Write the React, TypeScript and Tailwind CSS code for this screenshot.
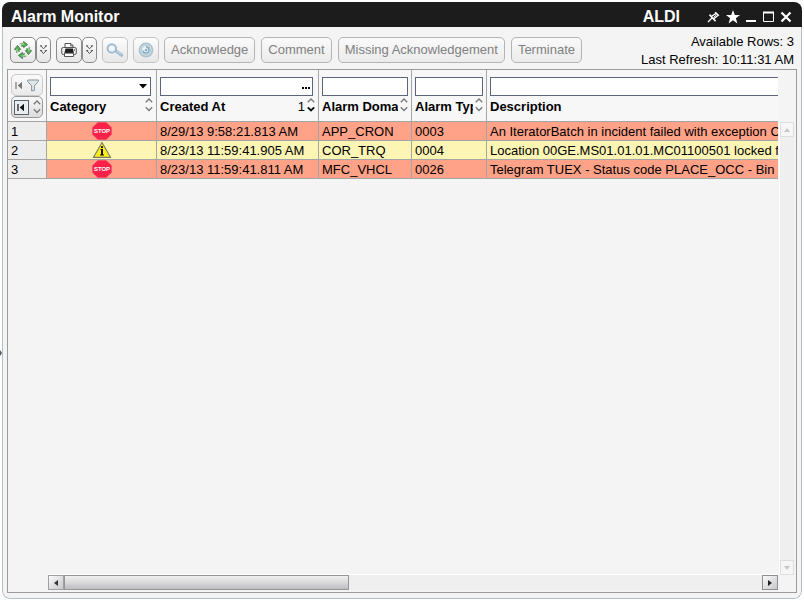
import type { ReactNode } from "react";

type Row = {
  id: number;
  level: "stop" | "warning";
  createdAt: string;
  domain: string;
  type: string;
  description: string;
};

const rows: Row[] = [
  { id: 1, level: "stop", createdAt: "8/29/13 9:58:21.813 AM", domain: "APP_CRON", type: "0003", description: "An IteratorBatch in incident failed with exception C" },
  { id: 2, level: "warning", createdAt: "8/23/13 11:59:41.905 AM", domain: "COR_TRQ", type: "0004", description: "Location 00GE.MS01.01.01.MC01100501 locked f" },
  { id: 3, level: "stop", createdAt: "8/23/13 11:59:41.811 AM", domain: "MFC_VHCL", type: "0026", description: "Telegram TUEX - Status code PLACE_OCC - Bin" },
];

function ToolButton({ label, className, children }: { label: string; className: string; children: ReactNode }) {
  return (
    <button
      type="button"
      aria-label={label}
      className={`flex h-[26px] items-center justify-center rounded-[5px] border bg-linear-to-b from-[#fdfdfd] to-[#e6e6e6] ${className}`}
    >
      {children}
    </button>
  );
}

function TextButton({ children }: { children: string }) {
  return (
    <button
      type="button"
      disabled
      className="h-[26px] shrink-0 rounded-[5px] border border-[#b4b4b4] bg-linear-to-b from-[#fafafa] to-[#ebebeb] px-1.5 whitespace-nowrap text-[#808080]"
    >
      {children}
    </button>
  );
}

function DoubleChevron() {
  return (
    <svg width="7" height="10" viewBox="0 0 7 10" fill="none" stroke="#555" strokeWidth="1">
      <path d="M.7 .8 3.5 3.8 6.3 .8M.7 5.5 3.5 8.6 6.3 5.5" />
      <path d="M0 .9h2.2M4.8 .9H7M0 5.6h2.2M4.8 5.6H7" />
    </svg>
  );
}

function RecycleIcon() {
  return (
    <svg width="18" height="18" viewBox="0 0 18 18">
      {[0, 90, 180, 270].map((angle) => (
        <g key={angle} transform={`rotate(${angle} 9 9)`}>
          <path d="M5.4 3.4A6.7 6.7 0 0 1 9.6 2.2V.4L13.6 3.6 9.6 6.6V5.1A4.4 4.4 0 0 0 7.3 5.6Z" fill="#4fb84e" stroke="#3f5040" strokeWidth=".7" />
          <path d="M6 3.9A6.2 6.2 0 0 1 10 2.9" fill="none" stroke="#c7ecc3" strokeWidth="1" />
          <path d="M5.2 3.4 7.2 5.7" stroke="#fff" strokeWidth="1.2" />
        </g>
      ))}
    </svg>
  );
}

function PrinterIcon() {
  return (
    <svg width="16" height="16" viewBox="0 0 16 16" fill="none" stroke="#555" strokeWidth="1">
      <path d="M4 6V1.5h6L12 3.5V6" fill="#fff" />
      <path d="M9.7 1.7v2.1H12" />
      <rect x=".7" y="5.5" width="14.6" height="7" rx="1.5" fill="#f2f2f2" />
      <path d="M4.5 6.5h7.5l.8 4.5H3.4Z" fill="#1c1c1c" stroke="none" />
      <path d="M3.5 11.2h9v3.3h-9Z" fill="#fff" />
      <path d="M13.5 7.3v1.4" />
    </svg>
  );
}

function SearchIcon() {
  return (
    <svg width="18" height="15" viewBox="0 0 18 15" fill="none">
      <path d="m10 8 5.6 4.2" stroke="#a3bed2" strokeWidth="3.4" strokeLinecap="round" />
      <path d="m11.2 8.3 4.2 3.1" stroke="#cfe0ec" strokeWidth="1" />
      <circle cx="5.8" cy="5.4" r="4.2" fill="#f1f6fa" stroke="#9dbad0" strokeWidth="2" />
    </svg>
  );
}

function TargetIcon() {
  return (
    <svg width="16" height="16" viewBox="0 0 16 16" fill="none">
      <circle cx="8" cy="8" r="6.6" fill="#d5e2e8" stroke="#a9c3ce" strokeWidth="1.6" />
      <circle cx="8" cy="8" r="4.4" fill="#f0f5f7" stroke="#9dbac7" strokeWidth=".8" />
      <path d="M8 5a3 3 0 1 1-3 3.6" stroke="#86abbc" strokeWidth="1.5" />
      <circle cx="8" cy="8" r="1.3" fill="#86abbc" />
    </svg>
  );
}

function SortArrows({ active = false }: { active?: boolean }) {
  return (
    <svg width="8" height="14" viewBox="0 0 8 14" fill="none" className="shrink-0">
      <path d="M.8 4.2 4 1l3.2 3.2" stroke="#777" strokeWidth="1.3" />
      <path d="M.8 9.3 4 12.5l3.2-3.2" stroke={active ? "#111" : "#777"} strokeWidth={active ? "1.8" : "1.3"} />
    </svg>
  );
}

function FirstIcon({ color }: { color: string }) {
  return (
    <svg width="8" height="9" viewBox="0 0 8 9">
      <path d="M1 1v7" stroke={color} strokeWidth="1.2" />
      <path d="M7 .8v7.4L2.7 4.5Z" fill={color} />
    </svg>
  );
}

function StopIcon() {
  return (
    <svg role="img" aria-label="Stop" width="20" height="18" viewBox="0 0 20 18" className="mx-auto block">
      <path d="M6 .3h8l5.6 5.2v7L14 17.7H6L.4 12.5v-7Z" fill="#fb2148" stroke="#f25a6d" strokeWidth=".6" />
      <text x="10" y="11.4" textAnchor="middle" fontSize="6" fontWeight="700" fill="#fff" fontFamily="Liberation Sans, sans-serif">
        STOP
      </text>
    </svg>
  );
}

function WarningIcon() {
  return (
    <svg role="img" aria-label="Warning" width="20" height="18" viewBox="0 0 20 18" className="mx-auto block">
      <path d="M10 1.4 18.6 16.4H1.4Z" fill="#ffed12" stroke="#77776a" strokeWidth="1.1" strokeLinejoin="round" />
      <path d="M8.5 8h2.5v5.5h1v1.1H8v-1.1h1V9h-.5Z" fill="#111" />
      <rect x="9" y="5.2" width="2" height="1.8" fill="#111" />
    </svg>
  );
}

function HeaderCell({
  label,
  filter,
  order,
  sortable = true,
  last = false,
}: {
  label: string;
  filter: ReactNode;
  order?: string;
  sortable?: boolean;
  last?: boolean;
}) {
  return (
    <th scope="col" className={`overflow-hidden border-b border-[#a5a5a5] p-0 pt-[7px] text-left align-top ${last ? "" : "border-r"}`}>
      <div className={last ? "pl-[3px]" : "px-[3px]"}>
        {filter}
        <div className="flex h-[22px] items-center">
          <span className="min-w-0 flex-1 overflow-hidden whitespace-nowrap">{label}</span>
          {order && <span className="font-normal">{order}</span>}
          {sortable && (
            <span className="flex w-[10px] shrink-0 justify-end pb-1">
              <SortArrows active={Boolean(order)} />
            </span>
          )}
        </div>
      </div>
    </th>
  );
}

const field = "block h-[19px] w-full rounded-none border border-[#5b6478] bg-white px-1 font-normal outline-none";

export default function App() {
  return (
    <div className="relative flex h-screen flex-col bg-white px-0.5 pt-0.5 pb-[5px] font-['Liberation_Sans',Arial,sans-serif] text-[13px] leading-[18px] text-black">
      <svg className="absolute top-[348px] left-0" width="3" height="9" viewBox="0 0 3 9">
        <path d="M0 2v6l2-3Z" fill="#555" />
      </svg>
      <main className="flex min-h-0 flex-1 flex-col overflow-hidden rounded-lg bg-[#f4f4f4]">
        <header className="flex h-[25px] shrink-0 items-center bg-[#1c1c1c] pt-1 pr-[10px] pl-[9px] text-white">
          <h1 className="flex-1 text-base font-bold">Alarm Monitor</h1>
          <span className="mr-[27px] text-base font-bold">ALDI</span>
          <div className="flex items-center gap-[6px]">
            <button type="button" aria-label="Pin">
              <svg width="13" height="12" viewBox="0 0 13 12" className="block" fill="none" stroke="#fff" strokeWidth="1.3">
                <path d="M1 11 5 7" />
                <path d="M2.5 3.6 8.6 10.2" strokeWidth="1.6" />
                <path d="M4.6 5.2 9 2.4M6.9 7.8 10.8 4.4" />
                <path d="M8.2 1.2 11.8 4.8" strokeWidth="1.6" />
                <path d="M6.5 6.5 9.6 3.6" strokeWidth="1" />
              </svg>
            </button>
            <button type="button" aria-label="Favourite">
              <svg width="14" height="14" viewBox="0 0 14 14" className="block" fill="#fff">
                <path d="M7 0 8.8 5H14L9.9 8.2 11.4 13.5 7 10.3 2.6 13.5 4.1 8.2 0 5H5.2Z" />
              </svg>
            </button>
            <button type="button" aria-label="Minimize">
              <svg width="11" height="12" viewBox="0 0 11 12" className="block">
                <path d="M0 10h10" stroke="#fff" strokeWidth="2" />
              </svg>
            </button>
            <button type="button" aria-label="Maximize">
              <svg width="11" height="12" viewBox="0 0 11 12" className="block" fill="none" stroke="#fff">
                <path d="M.5 1v9.5h10V1" />
                <path d="M0 1.5h11" strokeWidth="2" />
              </svg>
            </button>
            <button type="button" aria-label="Close">
              <svg width="12" height="12" viewBox="0 0 12 12" className="block" stroke="#fff" strokeWidth="2.2">
                <path d="m1.5 1.5 9 9M10.5 1.5l-9 9" />
              </svg>
            </button>
          </div>
        </header>

        <div className="flex min-h-0 flex-1 flex-col rounded-b-lg border border-t-0 border-[#b3bec7] px-1 pb-[5px]">
          <div className="flex h-[42px] shrink-0 items-start justify-between px-[3px]">
            <div className="flex gap-[5px] pt-[10px]">
              <div className="flex">
                <ToolButton label="Refresh" className="w-[26px] border-[#8c8c8c]">
                  <RecycleIcon />
                </ToolButton>
                <ToolButton label="Refresh options" className="w-[15px] border-[#8c8c8c]">
                  <DoubleChevron />
                </ToolButton>
              </div>
              <div className="flex">
                <ToolButton label="Print" className="w-[26px] border-[#8c8c8c]">
                  <PrinterIcon />
                </ToolButton>
                <ToolButton label="Print options" className="w-[15px] border-[#8c8c8c]">
                  <DoubleChevron />
                </ToolButton>
              </div>
              <ToolButton label="Search" className="w-[26px] border-[#c4c4c4]">
                <SearchIcon />
              </ToolButton>
              <ToolButton label="Details" className="w-[26px] border-[#c4c4c4]">
                <TargetIcon />
              </ToolButton>
              <div className="flex gap-1.5">
                <TextButton>Acknowledge</TextButton>
                <TextButton>Comment</TextButton>
                <TextButton>Missing Acknowledgement</TextButton>
                <TextButton>Terminate</TextButton>
              </div>
            </div>
            <div className="pt-[6px] text-right whitespace-nowrap">
              <p>Available Rows: 3</p>
              <p>Last Refresh: 10:11:31 AM</p>
            </div>
          </div>

          <section className="flex min-h-0 flex-1 border border-[#9b9b9b] pb-0.5">
            <div className="flex min-w-0 flex-1 flex-col">
              <table className="w-full table-fixed border-separate border-spacing-0">
                <colgroup>
                  <col className="w-[39px]" />
                  <col className="w-[110px]" />
                  <col className="w-[162px]" />
                  <col className="w-[93px]" />
                  <col className="w-[75px]" />
                  <col />
                </colgroup>
                <thead className="bg-[#f7f7f7]">
                  <tr className="h-[52px]">
                    <td className="border-r border-b border-[#a5a5a5] p-0 pt-1 pl-[3px] align-top">
                      <button type="button" aria-label="Filter" className="flex h-[22px] w-8 items-center justify-center gap-1 rounded-[5px] border border-[#cacaca] bg-linear-to-b from-[#fafafa] to-[#eaeaea]">
                        <FirstIcon color="#777" />
                        <svg width="12" height="13" viewBox="0 0 12 13" fill="#dfe7ea" stroke="#87949a">
                          <path d="M.7 1h10.6v1.5L7.4 6.8v4.6L4.6 12V6.8L.7 2.5Z" />
                        </svg>
                      </button>
                      <button type="button" aria-label="Sort" className="flex h-[22px] w-8 items-center justify-center gap-1 rounded-[5px] border border-[#999] bg-linear-to-b from-[#f8f8f8] to-[#dcdcdc]">
                        <span className="flex h-[15px] w-[15px] items-center justify-center border border-[#59636b] bg-[#e9edf0]">
                          <FirstIcon color="#111" />
                        </span>
                        <SortArrows />
                      </button>
                    </td>
                    <HeaderCell
                      label="Category"
                      filter={
                        <div className="relative mr-0.5">
                          <select aria-label="Category filter" className={`${field} appearance-none`}>
                            <option></option>
                          </select>
                          <svg className="pointer-events-none absolute top-[7px] right-1" width="8" height="5" viewBox="0 0 8 5">
                            <path d="M0 0h8L4 4.5Z" />
                          </svg>
                        </div>
                      }
                    />
                    <HeaderCell
                      label="Created At"
                      order="1"
                      filter={
                        <div className="relative mr-0.5">
                          <input aria-label="Created At filter" className={field} />
                          <button type="button" aria-label="Choose date" className="absolute top-[10px] right-[3px] flex h-[2px] gap-px">
                            <span className="h-[2px] w-[2px] bg-black" />
                            <span className="h-[2px] w-[2px] bg-black" />
                            <span className="h-[2px] w-[2px] bg-black" />
                          </button>
                        </div>
                      }
                    />
                    <HeaderCell label="Alarm Domain" filter={<input aria-label="Alarm Domain filter" className={field} />} />
                    <HeaderCell label="Alarm Type" filter={<input aria-label="Alarm Type filter" className={field} />} />
                    <HeaderCell label="Description" sortable={false} last filter={<input aria-label="Description filter" className={`${field} border-r-0`} />} />
                  </tr>
                </thead>
                <tbody className="leading-4">
                  {rows.map((row) => (
                    <tr
                      key={row.id}
                      className={`h-[19px] *:overflow-hidden *:border-b *:border-[#a5a5a5] *:whitespace-nowrap ${row.level === "stop" ? "bg-[#ffa288]" : "bg-[#fdf5b4]"}`}
                    >
                      <th scope="row" className="border-r bg-[#ededed] p-0 pt-0.5 pl-[3px] text-left font-normal">{row.id}</th>
                      <td className="border-r p-0">{row.level === "stop" ? <StopIcon /> : <WarningIcon />}</td>
                      <td className="border-r p-0 pt-0.5 pl-[3px]">{row.createdAt}</td>
                      <td className="border-r p-0 pt-0.5 pl-[3px]">{row.domain}</td>
                      <td className="border-r p-0 pt-0.5 pl-[3px]">{row.type}</td>
                      <td className="p-0 pt-0.5 pl-[3px]">{row.description}</td>
                    </tr>
                  ))}
                </tbody>
              </table>
              <div className="mt-auto ml-10 flex h-4 border-t border-white bg-[#efefef]">
                <button type="button" aria-label="Scroll left" className="flex w-4 items-center justify-center border border-[#a0a0a0] bg-linear-to-br from-[#fafafa] to-[#c8c8cc]">
                  <svg width="4" height="6" viewBox="0 0 4 6"><path d="M4 0v6L0 3Z" fill="#333" /></svg>
                </button>
                <div className="w-[39%] border border-[#969696] bg-linear-to-b from-[#f0f0f0] via-[#dadadc] to-[#bcbcc2]" />
                <button type="button" aria-label="Scroll right" className="ml-auto flex w-4 items-center justify-center border border-[#8e8e8e] bg-linear-to-br from-[#fafafa] to-[#c8c8cc]">
                  <svg width="4" height="6" viewBox="0 0 4 6"><path d="M0 0v6l4-3Z" fill="#222" /></svg>
                </button>
              </div>
            </div>
            <div className="flex w-[18px] shrink-0 flex-col pt-[52px] pr-0.5 pb-[15px] pl-px">
              <div className="flex flex-1 flex-col justify-between border-l border-white bg-[#efefef]">
                <button type="button" aria-label="Scroll up" className="flex h-[15px] items-center justify-center border border-[#dedede] bg-[#f6f6f6]">
                  <svg width="6" height="4" viewBox="0 0 6 4"><path d="M0 4h6L3 0Z" fill="#c6c6c6" /></svg>
                </button>
                <button type="button" aria-label="Scroll down" className="flex h-[15px] items-center justify-center border border-[#dedede] bg-[#f6f6f6]">
                  <svg width="6" height="4" viewBox="0 0 6 4"><path d="M0 0h6L3 4Z" fill="#c6c6c6" /></svg>
                </button>
              </div>
            </div>
          </section>
        </div>
      </main>
    </div>
  );
}
